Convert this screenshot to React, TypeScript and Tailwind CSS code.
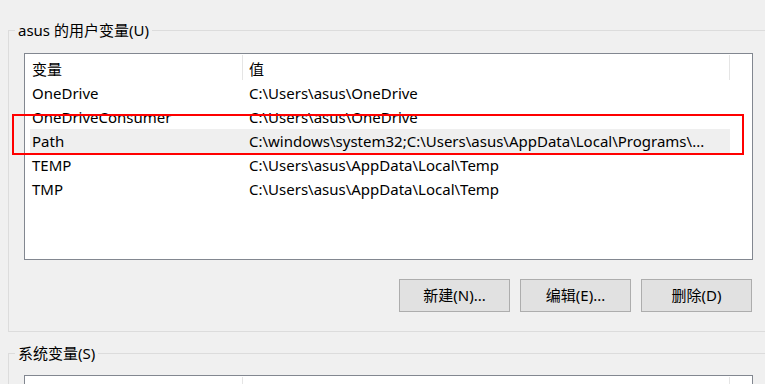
import React from 'react';

interface EnvVar {
  name: string;
  value: string;
}

const userVars: EnvVar[] = [
  { name: 'OneDrive', value: 'C:\\Users\\asus\\OneDrive' },
  { name: 'OneDriveConsumer', value: 'C:\\Users\\asus\\OneDrive' },
  { name: 'Path', value: 'C:\\windows\\system32;C:\\Users\\asus\\AppData\\Local\\Programs\\...' },
  { name: 'TEMP', value: 'C:\\Users\\asus\\AppData\\Local\\Temp' },
  { name: 'TMP', value: 'C:\\Users\\asus\\AppData\\Local\\Temp' },
];

// header of a list view; the lower list is cut off by the window so it shows no labels
const ListHeader: React.FC<{ labels?: boolean }> = ({ labels = true }) => (
  <div className="flex h-[27px]">
    <div className="w-[217px] pl-[7px] pt-[5px] leading-[20px]">{labels ? '变量' : ''}</div>
    <div className="w-px mt-px mb-px bg-[#e5e5e5]" />
    <div className="w-[486px] pl-[6px] pt-[5px] leading-[20px]">{labels ? '值' : ''}</div>
    <div className="w-px mt-px mb-px bg-[#e5e5e5]" />
  </div>
);

const Button: React.FC<{ label: string }> = ({ label }) => (
  <button className="w-[111px] h-[33px] bg-[#e1e1e1] border border-[#adadad] text-[15px] text-black">
    {label}
  </button>
);

const App: React.FC = () => {
  const selected = 'Path';

  return (
    <div
      className="relative w-[765px] h-[384px] overflow-hidden bg-[#f0f0f0] text-[15px] text-black"
      style={{ fontFamily: '"Segoe UI", "Noto Sans", "Noto Sans CJK SC", sans-serif' }}
    >
      <div className="pl-2">
        <fieldset className="w-[790px] mt-[20px] border border-[#dcdcdc]">
          <legend className="ml-[6px] px-[3px] leading-[20px]">asus 的用户变量(U)</legend>
          <div className="ml-[15px] mt-[13px] w-[729px] h-[207px] border border-[#828790] bg-white">
            <ListHeader />
            <div>
              {userVars.map((v) => (
                <div
                  key={v.name}
                  className={`ml-[5px] w-[700px] h-[24px] leading-[24px] grid grid-cols-[219px_1fr] ${
                    v.name === selected ? 'bg-[#efefef]' : ''
                  }`}
                >
                  <div className="pl-[2px] truncate">{v.name}</div>
                  <div className="truncate pr-[4px]">{v.value}</div>
                </div>
              ))}
            </div>
          </div>
          <div className="ml-[14px] w-[729px] mt-[19px] mb-[19px] flex justify-end gap-[10px]">
            <Button label="新建(N)..." />
            <Button label="编辑(E)..." />
            <Button label="删除(D)" />
          </div>
        </fieldset>

        <fieldset className="w-[790px] mt-[11px] border border-[#dcdcdc]">
          <legend className="ml-[6px] px-[3px] leading-[20px]">系统变量(S)</legend>
          <div className="ml-[15px] mt-[12px] w-[729px] h-[120px] border border-[#828790] bg-white">
            <ListHeader labels={false} />
          </div>
        </fieldset>
      </div>

      {/* annotation box around the Path row */}
      <div className="absolute left-[12px] top-[114px] w-[732px] h-[41px] border-2 border-[#ff0000] pointer-events-none" />
    </div>
  );
};

export default App;
